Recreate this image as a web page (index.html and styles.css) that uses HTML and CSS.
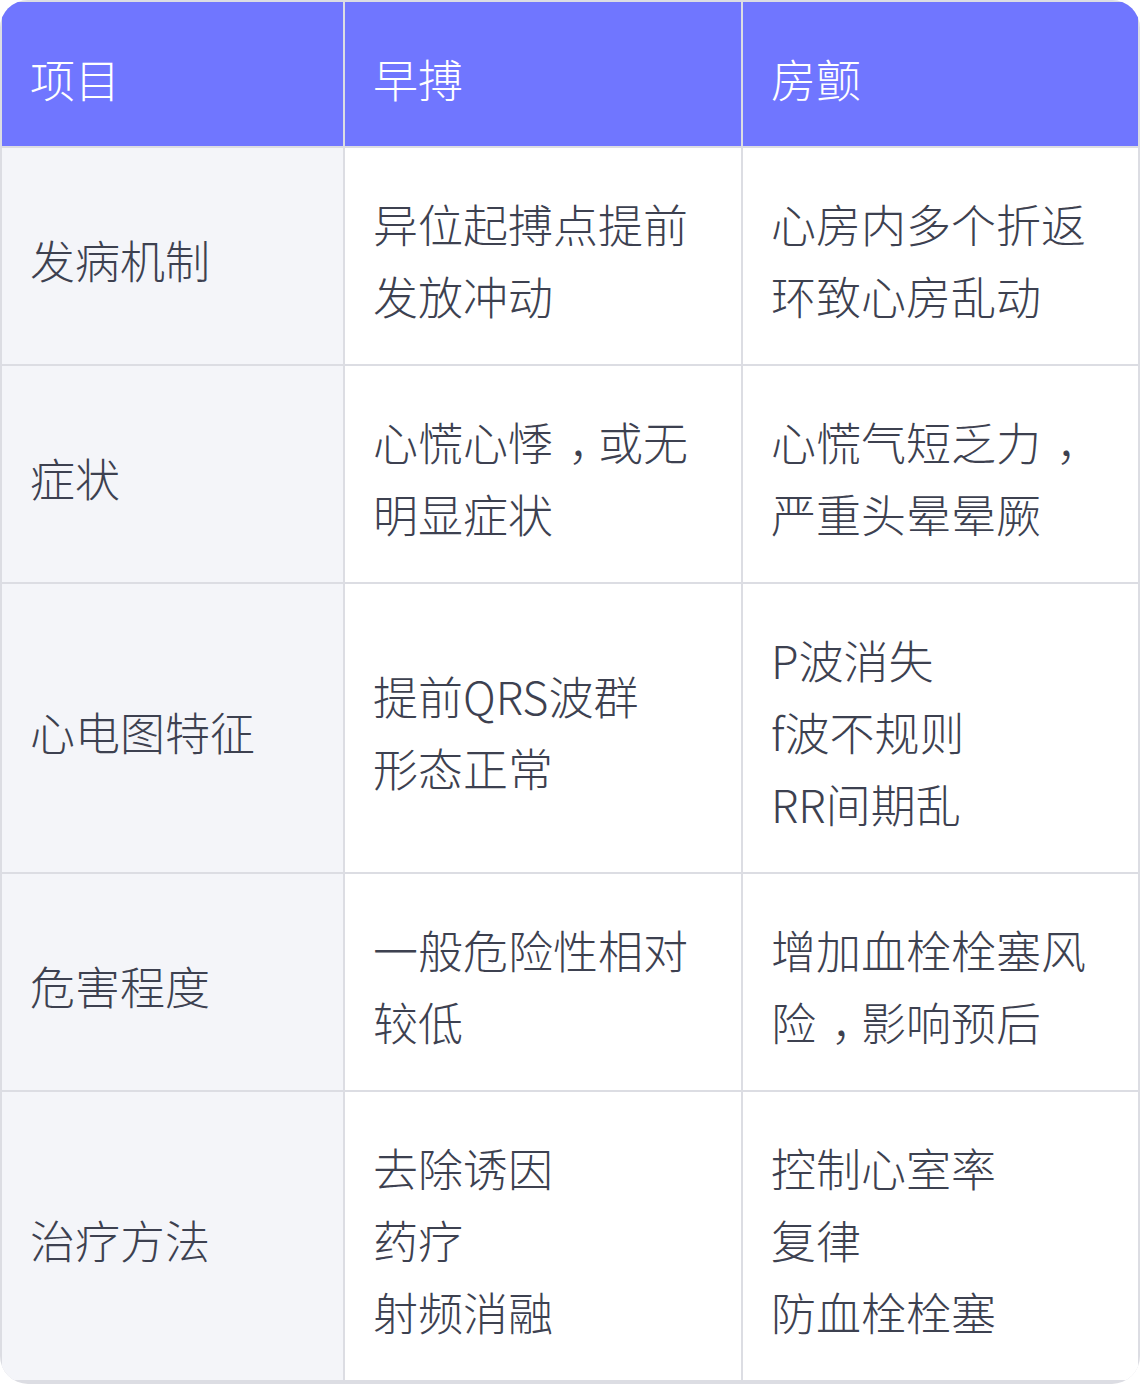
FILE: index.html
```html
<!DOCTYPE html>
<html lang="zh-CN">
<head>
<meta charset="utf-8">
<link rel="stylesheet" href="styles.css">
</head>
<body>
<div class="table">
  <div class="cell head"><div>项目</div></div>
  <div class="cell head"><div>早搏</div></div>
  <div class="cell head"><div>房颤</div></div>

  <div class="cell label"><div>发病机制</div></div>
  <div class="cell"><div>异位起搏点提前<br>发放冲动</div></div>
  <div class="cell"><div>心房内多个折返<br>环致心房乱动</div></div>

  <div class="cell label"><div>症状</div></div>
  <div class="cell"><div>心慌心悸<span class="punct">，</span>或无<br>明显症状</div></div>
  <div class="cell"><div>心慌气短乏力<span class="punct">，</span><br>严重头晕晕厥</div></div>

  <div class="cell label"><div>心电图特征</div></div>
  <div class="cell"><div>提前QRS波群<br>形态正常</div></div>
  <div class="cell"><div>P波消失<br>f波不规则<br>RR间期乱</div></div>

  <div class="cell label"><div>危害程度</div></div>
  <div class="cell"><div>一般危险性相对<br>较低</div></div>
  <div class="cell"><div>增加血栓栓塞风<br>险<span class="punct">，</span>影响预后</div></div>

  <div class="cell label"><div>治疗方法</div></div>
  <div class="cell"><div>去除诱因<br>药疗<br>射频消融</div></div>
  <div class="cell"><div>控制心室率<br>复律<br>防血栓栓塞</div></div>
</div>
</body>
</html>
```

FILE: styles.css
```css
html, body {
  margin: 0;
  padding: 0;
  background: #ffffff;
}

.table {
  width: 1140px;
  height: 1384px;
  box-sizing: border-box;
  display: grid;
  grid-template-columns: 341px 396px 395px;
  grid-template-rows: 144px 216px 216px 288px 216px 288px;
  gap: 2px;
  padding: 2px;
  background: #dcdde3;
  border-radius: 28px;
  overflow: hidden;
  font-family: "Noto Sans CJK SC", "Noto Sans", sans-serif;
  font-weight: 300;
  font-size: 45px;
  line-height: 72px;
  color: #3d4150;
}

.cell {
  background: #ffffff;
  padding: 8px 28px 0 28px;
  display: flex;
  align-items: center;
  white-space: nowrap;
}

.punct {
  padding-left: 0.34em;
  letter-spacing: -0.34em;
}

.head {
  background: #7076ff;
  color: #ffffff;
  padding-top: 10px;
}

.label {
  background: #f4f5f9;
}
```
